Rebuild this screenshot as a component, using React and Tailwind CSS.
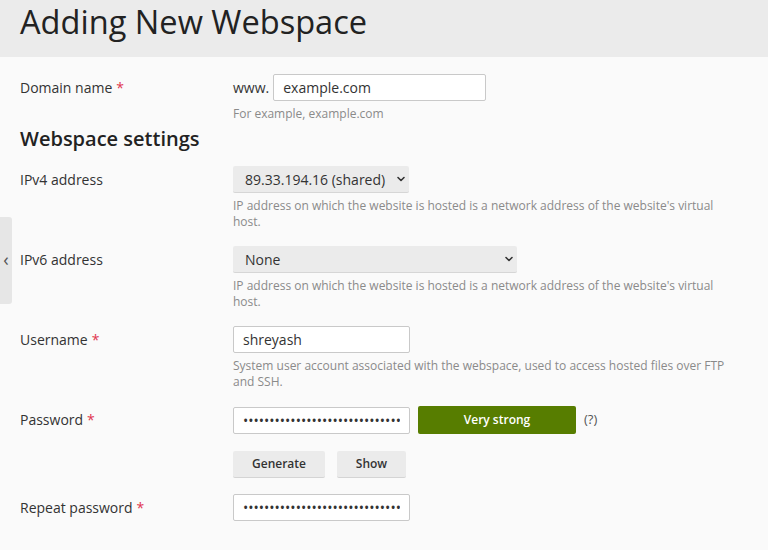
import React from 'react';

const Chevron = () => (
    <svg className="w-[10px] h-[10px] text-[#333]" viewBox="0 0 10 10" fill="none">
        <path d="M2 3.5 L5 6.5 L8 3.5" stroke="currentColor" strokeWidth="1.6" strokeLinecap="round" strokeLinejoin="round" />
    </svg>
);

const Req = () => <span className="text-[#e0354f] ml-1">*</span>;

const Hint = ({ children }) => (
    <p className="mt-[5px] text-[12px] leading-[16px] text-[#8a8a8a] max-w-[500px]">{children}</p>
);

const Row = ({ label, required, children }) => (
    <div className="grid grid-cols-[213px_1fr]">
        <div className="h-[27px] flex items-center text-[14px] text-[#333]">
            {label}
            {required && <Req />}
        </div>
        <div>{children}</div>
    </div>
);

const inputCls = 'h-[27px] border border-[#c9c9c9] rounded-[2px] bg-white px-[9px] text-[14px] text-[#333] outline-none';

const App = () => {
    const pwd = 'aB3xQ9mLp2Vz7RtK4wYs8NhJ6cFd1GuE5';

    return (
        <div className="min-h-[550px] bg-[#fafafa] relative" style={{ fontFamily: '"Open Sans", "Noto Sans", sans-serif' }}>
            <div className="h-[57px] bg-[#ebebeb] px-5">
                <h1 className="text-[32.6px] leading-[44px] text-[#222]">Adding New Webspace</h1>
            </div>

            <div className="absolute left-0 top-[217px] w-[12px] h-[87px] bg-[#e6e6e6] rounded-r-[3px] flex items-center justify-center text-[#555] text-[18px] leading-none pb-[3px]">
                ‹
            </div>

            <div className="px-5 pt-[17px]">
                <Row label="Domain name" required>
                    <div className="flex items-center">
                        <span className="text-[14px] text-[#333] mr-[4px]">www.</span>
                        <input className={`${inputCls} w-[213px]`} defaultValue="example.com" />
                    </div>
                    <Hint>For example, example.com</Hint>
                </Row>

                <h2 className="mt-[3px] text-[20px] leading-[28px] font-semibold text-[#222]">Webspace settings</h2>

                <div className="mt-[13px] flex flex-col gap-[16px]">
                    <Row label="IPv4 address">
                        <div className="h-[27px] w-[176px] bg-[#ebebeb] border-b border-[#d6d6d6] rounded-[2px] flex items-center justify-between pl-[12px] pr-[3px] text-[14px] text-[#333]">
                            <span>89.33.194.16 (shared)</span>
                            <Chevron />
                        </div>
                        <Hint>IP address on which the website is hosted is a network address of the website's virtual host.</Hint>
                    </Row>

                    <Row label="IPv6 address">
                        <div className="h-[27px] w-[284px] bg-[#ebebeb] border-b border-[#d6d6d6] rounded-[2px] flex items-center justify-between pl-[12px] pr-[3px] text-[14px] text-[#333]">
                            <span>None</span>
                            <Chevron />
                        </div>
                        <Hint>IP address on which the website is hosted is a network address of the website's virtual host.</Hint>
                    </Row>

                    <Row label="Username" required>
                        <input className={`${inputCls} w-[177px]`} defaultValue="shreyash" />
                        <Hint>System user account associated with the webspace, used to access hosted files over FTP and SSH.</Hint>
                    </Row>

                    <Row label="Password" required>
                        <div className="flex items-center">
                            <input type="password" className={`${inputCls} w-[177px]`} defaultValue={pwd} />
                            <div className="ml-[8px] h-[28px] w-[158px] bg-[#577d00] rounded-[2px] flex items-center justify-center text-white text-[12px] font-semibold">
                                Very strong
                            </div>
                            <span className="ml-[8px] text-[13px] text-[#555]">(?)</span>
                        </div>
                        <div className="mt-[17px] flex gap-[12px]">
                            <button className="h-[27px] w-[92px] bg-[#ebebeb] border-b border-[#d4d4d4] rounded-[2px] text-[12px] font-semibold text-[#333]">Generate</button>
                            <button className="h-[27px] w-[69px] bg-[#ebebeb] border-b border-[#d4d4d4] rounded-[2px] text-[12px] font-semibold text-[#333]">Show</button>
                        </div>
                    </Row>

                    <Row label="Repeat password" required>
                        <input type="password" className={`${inputCls} w-[177px]`} defaultValue={pwd} />
                    </Row>
                </div>
            </div>
        </div>
    );
};

export default App;
